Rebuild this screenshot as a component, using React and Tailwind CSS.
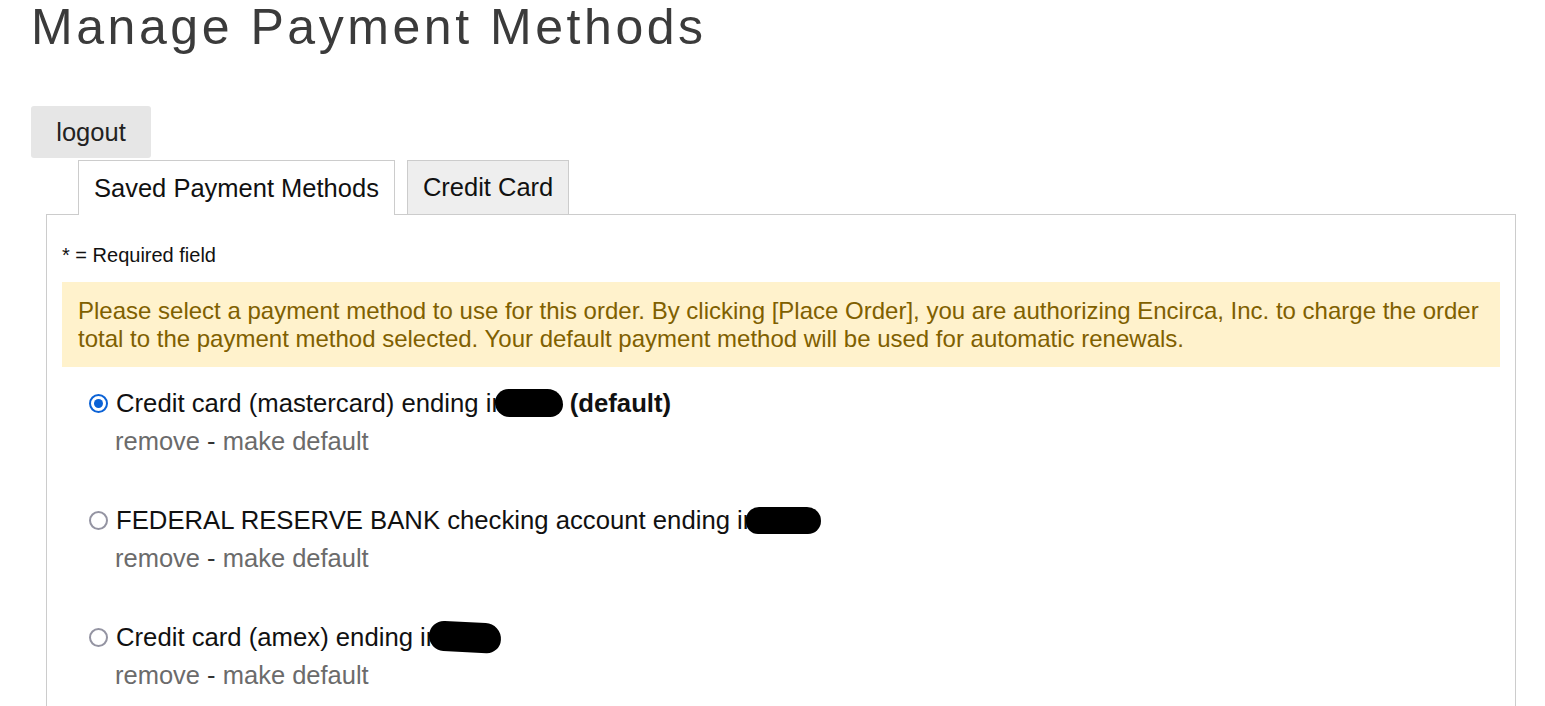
import React from 'react';

const METHODS = [
    { label: 'Credit card (mastercard) ending in', blob: 'w-[68px] h-[28px] -ml-[11px] rounded-[14px_16px_13px_15px]', isDefault: true, checked: true },
    { label: 'FEDERAL RESERVE BANK checking account ending in', blob: 'w-[75px] h-[27px] -ml-[11px] rounded-[13px_14px_13px_12px]', isDefault: false, checked: false },
    { label: 'Credit card (amex) ending in', blob: 'w-[72px] h-[30px] -ml-[11px] rounded-[15px_16px_14px_15px] rotate-[3deg]', isDefault: false, checked: false }
];

const Radio = ({ checked }) => (
    checked ? (
        <span className="w-[19px] h-[19px] rounded-full border-[2px] border-[#0b62d6] flex items-center justify-center shrink-0 bg-white">
            <span className="w-[9px] h-[9px] rounded-full bg-[#0b62d6]"></span>
        </span>
    ) : (
        <span className="w-[19px] h-[19px] rounded-full border-[2px] border-[#9494a2] shrink-0 bg-white"></span>
    )
);

const MethodRow = ({ m }) => (
    <div className="pl-[27px] mb-[41px]">
        <div className="flex items-center gap-[8px] h-[38px]">
            <Radio checked={m.checked} />
            <div className="flex items-center text-[25.7px] text-[#111] whitespace-nowrap">
                <span>{m.label}</span>
                <span className={`inline-block bg-black ${m.blob}`}></span>
                {m.isDefault && <span className="font-bold ml-[7px]">(default)</span>}
            </div>
        </div>
        <div className="pl-[26px] h-[38px] leading-[38px] text-[25.5px] text-[#6b6b6b]">
            <span>remove</span>
            <span className="text-[#333]"> - </span>
            <span>make default</span>
        </div>
    </div>
);

export default function App() {
    return (
        <div className="min-h-screen bg-white pl-[31px] pr-[29px] font-['Liberation_Sans',Arial,sans-serif]">
            <h1 className="pt-[2px] text-[50px] leading-none tracking-[3.55px] text-[#3b3b3b]">
                Manage Payment Methods
            </h1>

            <button className="mt-[54px] w-[120px] h-[52px] rounded-[3px] bg-[#e6e6e6] text-[25.5px] text-[#222] flex items-center justify-center">
                logout
            </button>

            <div className="ml-[15px] mt-[2px]">
                <div className="flex items-end pl-[32px] h-[54px]">
                    <div className="relative z-10 -mb-px h-[55px] px-[15px] flex items-center bg-white border border-b-0 border-[#cccccc] text-[25.5px] text-[#111]">
                        Saved Payment Methods
                    </div>
                    <div className="ml-[12px] h-[54px] px-[15px] flex items-center bg-[#eeeeee] border border-b-0 border-[#cccccc] text-[25.5px] text-[#111]">
                        Credit Card
                    </div>
                </div>

                <div className="border border-[#cccccc] px-[15px] pt-[27px] pb-[20px]">
                    <div className="text-[20px] leading-[26px] text-[#111]">* = Required field</div>

                    <div className="mt-[14px] bg-[#fff2cc] px-[16px] pt-[15px] pb-[14px] text-[24px] leading-[28px] text-[#7f6000]">
                        Please select a payment method to use for this order. By clicking [Place Order], you are authorizing Encirca, Inc. to charge the order total to the payment method selected. Your default payment method will be used for automatic renewals.
                    </div>

                    <div className="mt-[17px]">
                        {METHODS.map((m, i) => (
                            <MethodRow key={i} m={m} />
                        ))}
                    </div>
                </div>
            </div>
        </div>
    );
}
